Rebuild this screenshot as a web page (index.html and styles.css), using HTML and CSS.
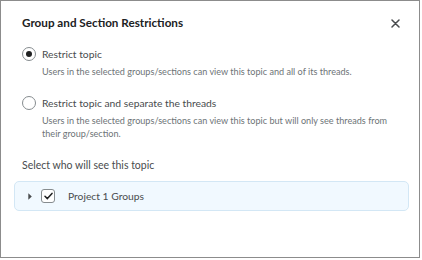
FILE: index.html
```html
<!DOCTYPE html>
<html>
<head>
<meta charset="utf-8">
<link rel="stylesheet" href="styles.css">
</head>
<body>
<div class="dialog">
  <div class="header">
    <h1 class="title">Group and Section Restrictions</h1>
    <svg class="close" width="9" height="9" viewBox="0 0 9 9"><path d="M1 1 L8 8 M8 1 L1 8" stroke="#494c4e" stroke-width="1.5" stroke-linecap="round"/></svg>
  </div>
  <div class="option first">
    <span class="radio checked"><span class="dot"></span></span>
    <div class="opt-text">
      <div class="label">Restrict topic</div>
      <div class="desc">Users in the selected groups/sections can view this topic and all of its threads.</div>
    </div>
  </div>
  <div class="option second">
    <span class="radio"></span>
    <div class="opt-text">
      <div class="label">Restrict topic and separate the threads</div>
      <div class="desc">Users in the selected groups/sections can view this topic but will only see threads from their group/section.</div>
    </div>
  </div>
  <div class="select-label">Select who will see this topic</div>
  <div class="tree">
    <svg class="caret" width="4" height="7" viewBox="0 0 4 7"><path d="M0.3 0.3 L3.8 3.5 L0.3 6.7 Z" fill="#494c4e"/></svg>
    <span class="checkbox"><svg width="9" height="8" viewBox="0 0 9 8"><path d="M1 4.2 L3.4 6.6 L8 1.4" fill="none" stroke="#202122" stroke-width="1.5" stroke-linecap="round" stroke-linejoin="round"/></svg></span>
    <span class="tree-label">Project 1 Groups</span>
  </div>
</div>
</body>
</html>
```
FILE: styles.css
```css
html, body { margin: 0; padding: 0; background: #fff; }
body { font-family: Lato, "Open Sans", sans-serif; color: #202122; }
.dialog {
  width: 418px;
  height: 256px;
  border: 1px solid #8c8c8c;
}
.header {
  display: flex;
  align-items: center;
  justify-content: space-between;
  padding: 13px 19px 0 21px;
  height: 16px;
}
.title {
  margin: 0;
  font-size: 11.7px;
  font-weight: 700;
  line-height: 16px;
  color: #202122;
}
.close { margin-top: 2px; }
.option {
  display: flex;
  align-items: flex-start;
  padding-left: 21px;
}
.option.first { padding-top: 17px; }
.option.second { padding-top: 18px; }
.radio {
  width: 12px;
  height: 12px;
  border: 1px solid #868c8f;
  border-radius: 50%;
  display: flex;
  align-items: center;
  justify-content: center;
  flex: none;
  background: #fff;
}
.dot { width: 6px; height: 6px; border-radius: 50%; background: #202122; }
.opt-text { margin-left: 6px; }
.label { font-size: 10.3px; line-height: 14px; color: #494c4e; }
.desc { font-size: 9.1px; line-height: 13px; color: #6e7477; margin-top: 4px; max-width: 352px; }
.select-label {
  font-size: 10.5px;
  line-height: 14px;
  color: #494c4e;
  padding: 18px 0 0 21px;
}
.tree {
  margin: 9px 10px 0 13px;
  height: 28px;
  border: 1px solid #d3e7f5;
  border-radius: 5px;
  background: #f1f9ff;
  display: flex;
  align-items: center;
  padding-left: 13px;
}
.caret { flex: none; }
.checkbox {
  width: 12px;
  height: 12px;
  border: 1px solid #868c8f;
  border-radius: 3px;
  background: #fff;
  margin-left: 9px;
  display: flex;
  align-items: center;
  justify-content: center;
}
.tree-label { margin-left: 13px; font-size: 10.3px; color: #494c4e; }
```
